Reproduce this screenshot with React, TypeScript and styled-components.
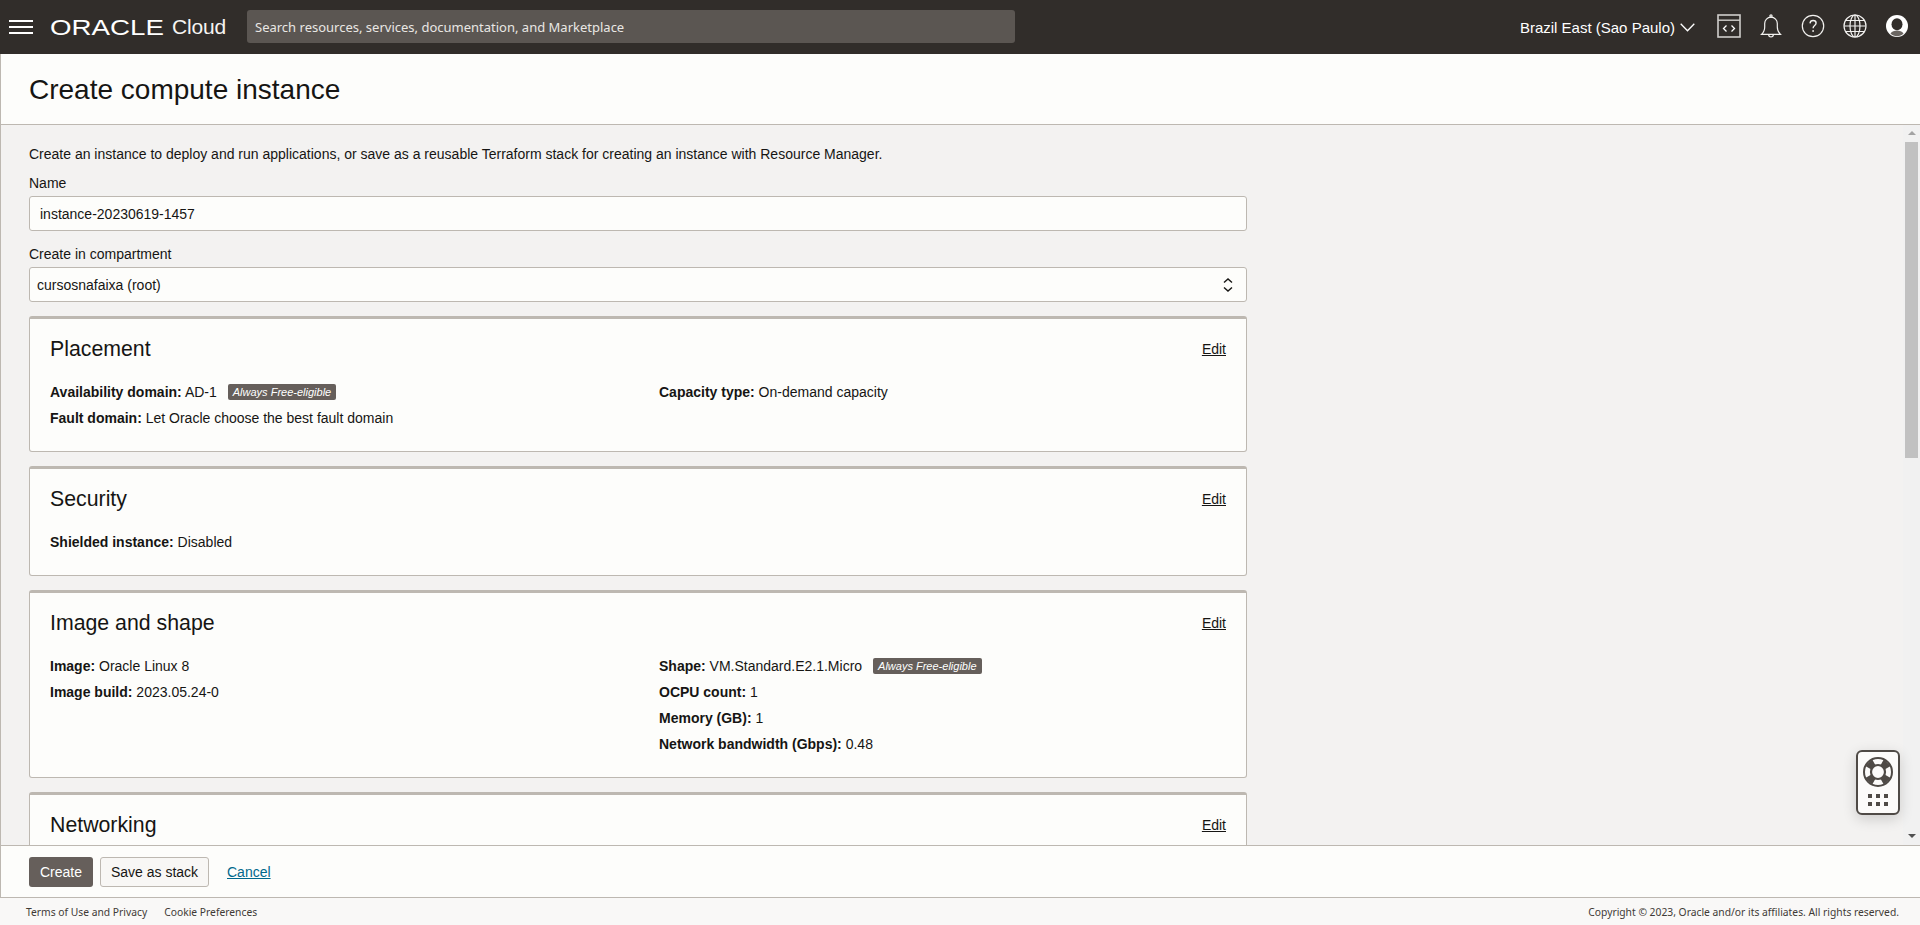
import styled, { createGlobalStyle } from "styled-components";

const GlobalStyle = createGlobalStyle`
  html, body {
    margin: 0;
    height: 100%;
    overflow: hidden;
  }
  body {
    font-family: "Liberation Sans", Arial, sans-serif;
    font-size: 14px;
    color: #161513;
    background: #f3f2f1;
  }
  #root {
    height: 100%;
  }
`;

const Hamburger = () => (
  <MenuButton aria-label="menu">
    <svg width="24" height="14" viewBox="0 0 24 14">
      <path d="M0 1h24M0 7h24M0 13h24" stroke="#fff" strokeWidth="2" />
    </svg>
  </MenuButton>
);

const OracleLogo = () => (
  <LogoSvg width="114" height="16" viewBox="0 0 114 16">
    <text
      x="0"
      y="15.5"
      fontFamily="Liberation Sans, Arial, sans-serif"
      fontSize="21.5"
      fill="#fff"
      textLength="114"
      lengthAdjust="spacingAndGlyphs"
    >
      ORACLE
    </text>
  </LogoSvg>
);

const CodeIcon = () => (
  <svg width="24" height="24" viewBox="0 0 24 24" fill="none" stroke="#d0cecb">
    <rect x="1" y="1" width="22" height="22" strokeWidth="1.6" />
    <path d="M1 6.2h22" strokeWidth="1.4" />
    <path d="M9.5 11.5 6.5 14.5l3 3M14.5 11.5l3 3-3 3" strokeWidth="1.3" stroke="#fff" />
  </svg>
);

const BellIcon = () => (
  <svg width="22" height="24" viewBox="0 0 22 24" fill="none" stroke="#f2f1ef" strokeWidth="1.2">
    <path d="M1.5 20.4c2-1.7 3.2-3.3 3.2-7.3V9.6C4.7 6 7.300 3.200 11 3.200s6.300 2.800 6.300 6.400v3.500c0 4 1.200 5.600 3.200 7.300z" />
    <circle cx="11" cy="2" r="1.100" />
    <path d="M8.600 20.600a2.400 2.400 0 0 0 4.800 0" />
  </svg>
);

const HelpIcon = () => (
  <svg width="24" height="24" viewBox="0 0 24 24" fill="none" stroke="#f2f1ef" strokeWidth="1.2">
    <circle cx="12" cy="12" r="10.700" />
    <path d="M9 9.300c.2-1.800 1.500-2.800 3.100-2.800 1.700 0 3 1.100 3 2.600 0 2.400-3 2.500-3 5.100" strokeWidth="1.400" />
    <circle cx="12.100" cy="17" r="0.900" fill="#f2f1ef" stroke="none" />
  </svg>
);

const GlobeIcon = () => (
  <svg width="24" height="24" viewBox="0 0 24 24" fill="none" stroke="#f2f1ef" strokeWidth="1.2">
    <circle cx="12" cy="12" r="11" />
    <ellipse cx="12" cy="12" rx="5" ry="11" />
    <path d="M12 1v22M1 12h22M2.600 6.500h18.800M2.600 17.500h18.800" />
  </svg>
);

const AvatarIcon = () => (
  <svg width="22" height="22" viewBox="0 0 22 22">
    <circle cx="11" cy="11" r="11" fill="#fff" />
    <ellipse cx="11" cy="9.300" rx="5.500" ry="6" fill="#312d2a" />
    <path
      d="M4.500 18.500c1.500-2.300 4-3 6.500-3s5 .7 6.500 3c-1.800 1.800-4 2.700-6.500 2.700s-4.700-.9-6.500-2.700z"
      fill="#6b6662"
    />
  </svg>
);

const SelectArrows = () => (
  <svg width="10" height="14" viewBox="0 0 10 14" fill="none" stroke="#161513" strokeWidth="1.4">
    <path d="M1 4.500 5 1l4 3.500M1 9.500 5 13l4-3.500" />
  </svg>
);

const LifeRing = () => (
  <svg width="30" height="30" viewBox="0 0 30 30">
    <circle cx="15" cy="15" r="14" fill="none" stroke="#4f4a46" strokeWidth="2" />
    <circle cx="15" cy="15" r="7" fill="none" stroke="#4f4a46" strokeWidth="2.200" />
    <path
      d="M27.700 9.100 20.900 2.300 17.400 8.400 21.600 12.600zM2.300 9.100 9.100 2.300 12.600 8.400 8.400 12.600zM27.700 20.900 20.900 27.700 17.400 21.600 21.600 17.400zM2.300 20.900 9.100 27.700 12.600 21.600 8.400 17.400z"
      fill="#4f4a46"
    />
  </svg>
);

const DotGrid = () => (
  <svg width="20" height="12" viewBox="0 0 20 12" fill="#4f4a46">
    {[0, 8, 16].map((x) =>
      [0, 8].map((y) => <rect key={`${x}-${y}`} x={x} y={y} width="4" height="4" />)
    )}
  </svg>
);

type DetailRow = {
  label: string;
  value: string;
  free?: boolean;
};

const Detail = ({ label, value, free }: DetailRow) => (
  <Row>
    <strong>{label}:</strong> {value}
    {free && <FreeBadge>Always Free-eligible</FreeBadge>}
  </Row>
);

type SectionProps = {
  title: string;
  left?: DetailRow[];
  right?: DetailRow[];
};

const Section = ({ title, left, right }: SectionProps) => (
  <Card>
    <CardHead>
      <CardTitle>{title}</CardTitle>
      <EditLink href="#">Edit</EditLink>
    </CardHead>
    {left && (
      <CardBody>
        <div>
          {left.map((row) => (
            <Detail key={row.label} {...row} />
          ))}
        </div>
        <div>
          {right?.map((row) => (
            <Detail key={row.label} {...row} />
          ))}
        </div>
      </CardBody>
    )}
  </Card>
);

const App = () => {
  return (
    <Page>
      <GlobalStyle />
      <Header>
        <Hamburger />
        <Brand>
          <OracleLogo />
          <CloudWord>Cloud</CloudWord>
        </Brand>
        <SearchBox placeholder="Search resources, services, documentation, and Marketplace" />
        <HeaderRight>
          <Region>
            Brazil East (Sao Paulo)
            <svg width="15" height="9" viewBox="0 0 15 9" fill="none" stroke="#fff" strokeWidth="1.3">
              <path d="M.7.7 7.500 7.800 14.300.7" />
            </svg>
          </Region>
          <IconSlot><CodeIcon /></IconSlot>
          <IconSlot><BellIcon /></IconSlot>
          <IconSlot><HelpIcon /></IconSlot>
          <IconSlot><GlobeIcon /></IconSlot>
          <IconSlot><AvatarIcon /></IconSlot>
        </HeaderRight>
      </Header>

      <TitleBand>
        <PageTitle>Create compute instance</PageTitle>
      </TitleBand>

      <Main>
        <Content>
          <Intro>
            Create an instance to deploy and run applications, or save as a reusable Terraform stack
            for creating an instance with Resource Manager.
          </Intro>
          <Form>
            <Field>
              <FieldLabel>Name</FieldLabel>
              <TextInput defaultValue="instance-20230619-1457" />
            </Field>
            <Field>
              <FieldLabel>Create in compartment</FieldLabel>
              <SelectBox>
                cursosnafaixa (root)
                <SelectArrows />
              </SelectBox>
            </Field>
            <Section
              title="Placement"
              left={[
                { label: "Availability domain", value: "AD-1", free: true },
                { label: "Fault domain", value: "Let Oracle choose the best fault domain" },
              ]}
              right={[{ label: "Capacity type", value: "On-demand capacity" }]}
            />
            <Section
              title="Security"
              left={[{ label: "Shielded instance", value: "Disabled" }]}
            />
            <Section
              title="Image and shape"
              left={[
                { label: "Image", value: "Oracle Linux 8" },
                { label: "Image build", value: "2023.05.24-0" },
              ]}
              right={[
                { label: "Shape", value: "VM.Standard.E2.1.Micro", free: true },
                { label: "OCPU count", value: "1" },
                { label: "Memory (GB)", value: "1" },
                { label: "Network bandwidth (Gbps)", value: "0.48" },
              ]}
            />
            <Section title="Networking" />
          </Form>
        </Content>
        <ScrollTrack>
          <ScrollArrow $dir="up" />
          <ScrollThumb />
          <ScrollArrow $dir="down" />
        </ScrollTrack>
        <HelpWidget>
          <LifeRing />
          <DotGrid />
        </HelpWidget>
      </Main>

      <ActionBar>
        <PrimaryButton>Create</PrimaryButton>
        <SecondaryButton>Save as stack</SecondaryButton>
        <CancelLink href="#">Cancel</CancelLink>
      </ActionBar>

      <Footer>
        <FooterLinks>
          <span>Terms of Use and Privacy</span>
          <span>Cookie Preferences</span>
        </FooterLinks>
        <span>Copyright © 2023, Oracle and/or its affiliates. All rights reserved.</span>
      </Footer>
    </Page>
  );
};

export default App;

const Page = styled.div`
  height: 100%;
  display: flex;
  flex-direction: column;
`;

const Header = styled.header`
  height: 54px;
  flex: none;
  display: flex;
  align-items: center;
  background: #312d2a;
  padding-left: 9px;
`;

const MenuButton = styled.button`
  width: 24px;
  height: 14px;
  padding: 0;
  border: 0;
  background: none;
  display: block;
  margin-top: -1px;
  margin-right: 17px;
`;

const Brand = styled.div`
  width: 197px;
  flex: none;
  display: flex;
  align-items: center;
  gap: 8px;
  color: #f5f4f2;
`;

const LogoSvg = styled.svg`
  overflow: visible;
  flex: none;
`;

const CloudWord = styled.span`
  font-size: 21px;
  line-height: 24px;
  letter-spacing: -0.2px;
`;

const SearchBox = styled.input`
  width: 768px;
  height: 33px;
  flex: none;
  box-sizing: border-box;
  margin-top: -1px;
  padding: 0 8px;
  border: 0;
  border-radius: 3px;
  background: #5b5652;
  color: #fff;
  font-family: "Noto Sans", sans-serif;
  font-size: 13px;
  outline: none;

  &::placeholder {
    color: #e9e7e4;
    opacity: 1;
  }
`;

const HeaderRight = styled.div`
  margin-left: auto;
  padding-right: 2px;
  display: flex;
  align-items: center;
`;

const Region = styled.div`
  display: flex;
  align-items: center;
  gap: 5px;
  margin-right: 13px;
  color: #fff;
  font-size: 15px;
  white-space: nowrap;
`;

const IconSlot = styled.div`
  width: 42px;
  height: 26px;
  display: flex;
  align-items: center;
  justify-content: center;
  margin-top: -2px;
`;

const TitleBand = styled.div`
  height: 71px;
  flex: none;
  box-sizing: border-box;
  display: flex;
  align-items: center;
  padding: 1px 0 0 28px;
  background: #fdfdfb;
  border-left: 1px solid #bdb8b1;
  border-bottom: 1px solid #bdb8b1;
`;

const PageTitle = styled.h1`
  margin: 0;
  font-size: 28px;
  font-weight: 400;
  line-height: 36px;
  color: #161513;
`;

const Main = styled.main`
  height: 720px;
  flex: none;
  position: relative;
  display: flex;
  border-left: 1px solid #bdb8b1;
  background: #f3f2f1;
`;

const Content = styled.div`
  flex: 1;
  min-width: 0;
  overflow: hidden;
  padding: 20px 0 0 28px;
`;

const Intro = styled.p`
  margin: 0 0 11px;
  line-height: 18px;
`;

const Form = styled.div`
  width: 1218px;
  display: flex;
  flex-direction: column;
  gap: 14px;
`;

const Field = styled.label`
  display: block;
`;

const FieldLabel = styled.div`
  line-height: 18px;
  margin-bottom: 4px;
`;

const TextInput = styled.input`
  width: 100%;
  height: 35px;
  box-sizing: border-box;
  display: block;
  padding: 0 10px;
  border: 1px solid #bdb8b1;
  border-radius: 3px;
  background: #fdfdfb;
  color: #161513;
  font-family: inherit;
  font-size: 14px;
  outline: none;
`;

const SelectBox = styled.div`
  height: 35px;
  box-sizing: border-box;
  display: flex;
  align-items: center;
  justify-content: space-between;
  padding: 0 13px 0 7px;
  border: 1px solid #bdb8b1;
  border-radius: 3px;
  background: #fdfdfb;
`;

const Card = styled.section`
  box-sizing: border-box;
  flex: none;
  padding: 18px 20px 20px;
  border: 1px solid #bdb8b1;
  border-top-width: 3px;
  border-radius: 3px;
  background: #fdfdfb;
`;

const CardHead = styled.div`
  display: flex;
  align-items: center;
  justify-content: space-between;
  height: 24px;
`;

const CardTitle = styled.h2`
  margin: 0;
  font-size: 21.3px;
  font-weight: 400;
  line-height: 24px;
  color: #161513;
`;

const EditLink = styled.a`
  color: #161513;
  font-size: 14px;
  text-decoration: underline;
`;

const CardBody = styled.div`
  display: grid;
  grid-template-columns: 609px 1fr;
  margin-top: 18px;
`;

const Row = styled.div`
  height: 26px;
  line-height: 26px;
  white-space: nowrap;
`;

const FreeBadge = styled.span`
  display: inline-block;
  height: 16px;
  margin-left: 11px;
  padding: 0 5px;
  border-radius: 2px;
  background: #665f5b;
  color: #fff;
  font-size: 11px;
  font-style: italic;
  line-height: 16px;
  vertical-align: 1px;
`;

const ScrollTrack = styled.div`
  width: 17px;
  flex: none;
  display: flex;
  flex-direction: column;
  align-items: center;
  background: #f1f1f1;
`;

const ScrollArrow = styled.div<{ $dir: "up" | "down" }>`
  flex: none;
  width: 0;
  height: 0;
  border-left: 4px solid transparent;
  border-right: 4px solid transparent;
  ${({ $dir }) =>
    $dir === "up"
      ? "border-bottom: 4px solid #a3a3a3; margin: 6px 0 7px;"
      : "border-top: 4px solid #505050; margin: auto 0 7px;"}
`;

const ScrollThumb = styled.div`
  width: 13px;
  height: 316px;
  flex: none;
  background: #c1c1c1;
`;

const HelpWidget = styled.div`
  position: absolute;
  right: 20px;
  bottom: 30px;
  width: 44px;
  height: 65px;
  box-sizing: border-box;
  display: flex;
  flex-direction: column;
  align-items: center;
  gap: 7px;
  padding-top: 5px;
  border: 2px solid #4f4a46;
  border-radius: 6px;
  background: #fcfbfa;
  box-shadow: 0 4px 14px rgba(0, 0, 0, 0.16);
`;

const ActionBar = styled.div`
  height: 53px;
  flex: none;
  box-sizing: border-box;
  display: flex;
  align-items: center;
  gap: 7px;
  padding-left: 28px;
  background: #fdfdfb;
  border-left: 1px solid #bdb8b1;
  border-top: 1px solid #bdb8b1;
  border-bottom: 1px solid #bdb8b1;
`;

const PrimaryButton = styled.button`
  width: 64px;
  height: 30px;
  padding: 0;
  border: 0;
  border-radius: 3px;
  background: #665f5b;
  color: #fff;
  font-family: inherit;
  font-size: 14px;
`;

const SecondaryButton = styled.button`
  width: 109px;
  height: 30px;
  padding: 0;
  border: 1px solid #bdb8b1;
  border-radius: 3px;
  background: #f8f7f5;
  color: #161513;
  font-family: inherit;
  font-size: 14px;
`;

const CancelLink = styled.a`
  margin-left: 11px;
  color: #00688c;
  font-size: 14px;
  text-decoration: underline;
`;

const Footer = styled.footer`
  height: 27px;
  flex: none;
  display: flex;
  align-items: center;
  justify-content: space-between;
  padding: 0 21px 0 26px;
  background: #f9f8f7;
  color: #3f3a36;
  font-family: "Noto Sans", sans-serif;
  font-size: 10.3px;
`;

const FooterLinks = styled.div`
  display: flex;
  gap: 17px;
`;
